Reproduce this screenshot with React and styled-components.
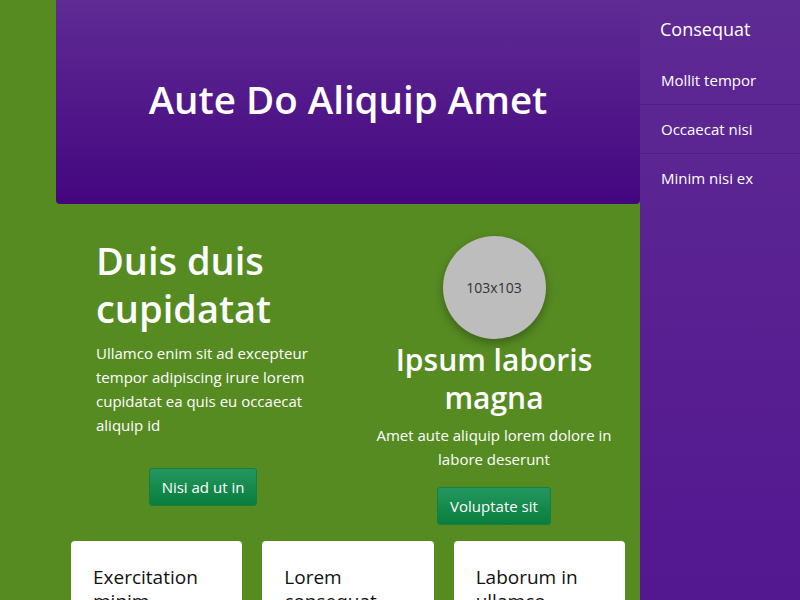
import styled, { createGlobalStyle } from "styled-components"

const Global = createGlobalStyle`
  html, body {
    margin: 0;
    padding: 0;
    background: #568b22;
    font-family: "Open Sans", "Noto Sans", sans-serif;
    overflow: hidden;
  }
  * { box-sizing: border-box; }
`

const Page = styled.div`
  display: flex;
  width: 800px;
  height: 600px;
  background: #568b22;
  overflow: hidden;
`

const Main = styled.main`
  width: 584px;
  margin-left: 56px;
  display: flex;
  flex-direction: column;
  flex-shrink: 0;
`

const Header = styled.header`
  height: 204px;
  flex-shrink: 0;
  display: flex;
  align-items: center;
  justify-content: center;
  padding-bottom: 6px;
  background: linear-gradient(to bottom, #5f2b94, #44067f);
  border-radius: 0 0 4px 4px;
`

const Title = styled.h1`
  margin: 0;
  color: #fff;
  font-size: 38.5px;
  font-weight: 600;
`

const Hero = styled.section`
  display: grid;
  grid-template-columns: 1fr 1fr;
  padding-top: 32px;
  flex-shrink: 0;
`

const Col = styled.div`
  display: flex;
  flex-direction: column;
  align-items: ${p => (p.center ? "center" : "flex-start")};
  text-align: ${p => (p.center ? "center" : "left")};
  padding: ${p => (p.center ? "0 20px" : "0 38px 0 40px")};
`

const Heading = styled.h2`
  margin: 0;
  color: #fff;
  font-size: ${p => p.size}px;
  line-height: ${p => p.lh}px;
  font-weight: 600;
`

const Text = styled.p`
  margin: ${p => p.top}px 0 0;
  color: #fff;
  font-size: 15px;
  line-height: 24px;
`

const Button = styled.button`
  align-self: center;
  margin-top: ${p => p.top}px;
  height: 38px;
  padding: 0 12px;
  border: 1px solid #167f45;
  border-radius: 3px;
  background: linear-gradient(to bottom, #23975f, #0a7e3e);
  color: #fff;
  font-family: inherit;
  font-size: 15px;
`

const Avatar = styled.div`
  width: 103px;
  height: 103px;
  border-radius: 50%;
  background: #bdbdbd;
  box-shadow: 0 4px 10px rgba(0, 0, 0, 0.3);
  display: flex;
  align-items: center;
  justify-content: center;
  color: #333;
  font-size: 14px;
  margin-bottom: 2px;
`

const Cards = styled.div`
  display: grid;
  grid-template-columns: repeat(3, 1fr);
  gap: 20px;
  padding: 0 15px;
  margin-top: 16px;
  flex-shrink: 0;
`

const Card = styled.div`
  background: #fff;
  border-radius: 4px;
  padding: 24px 22px;
  height: 120px;
`

const CardTitle = styled.h3`
  margin: 0;
  font-size: 19px;
  font-weight: 400;
  line-height: 24px;
  color: #111;
`

const Sidebar = styled.aside`
  width: 160px;
  height: 600px;
  background: linear-gradient(to bottom, #5e2a93, #531790);
  color: #fff;
`

const SideTitle = styled.div`
  font-size: 18px;
  padding: 17px 20px 15px;
`

const SideItem = styled.div`
  font-size: 15px;
  padding: 0 21px;
  height: 49px;
  display: flex;
  align-items: center;
  border-bottom: 1px solid ${p => (p.last ? "transparent" : "#4f1d84")};
`

export default function App() {
  return (
    <Page>
      <Global />
      <Main>
        <Header>
          <Title>Aute Do Aliquip Amet</Title>
        </Header>
        <Hero>
          <Col>
            <Heading size={38} lh={48}>Duis duis cupidatat</Heading>
            <Text top={9}>Ullamco enim sit ad excepteur tempor adipiscing irure lorem cupidatat ea quis eu occaecat aliquip id</Text>
            <Button top={31}>Nisi ad ut in</Button>
          </Col>
          <Col center>
            <Avatar>103x103</Avatar>
            <Heading size={30} lh={38}>Ipsum laboris magna</Heading>
            <Text top={6}>Amet aute aliquip lorem dolore in labore deserunt</Text>
            <Button top={16}>Voluptate sit</Button>
          </Col>
        </Hero>
        <Cards>
          <Card><CardTitle>Exercitation minim</CardTitle></Card>
          <Card><CardTitle>Lorem consequat</CardTitle></Card>
          <Card><CardTitle>Laborum in ullamco</CardTitle></Card>
        </Cards>
      </Main>
      <Sidebar>
        <SideTitle>Consequat</SideTitle>
        <SideItem>Mollit tempor</SideItem>
        <SideItem>Occaecat nisi</SideItem>
        <SideItem last>Minim nisi ex</SideItem>
      </Sidebar>
    </Page>
  )
}
